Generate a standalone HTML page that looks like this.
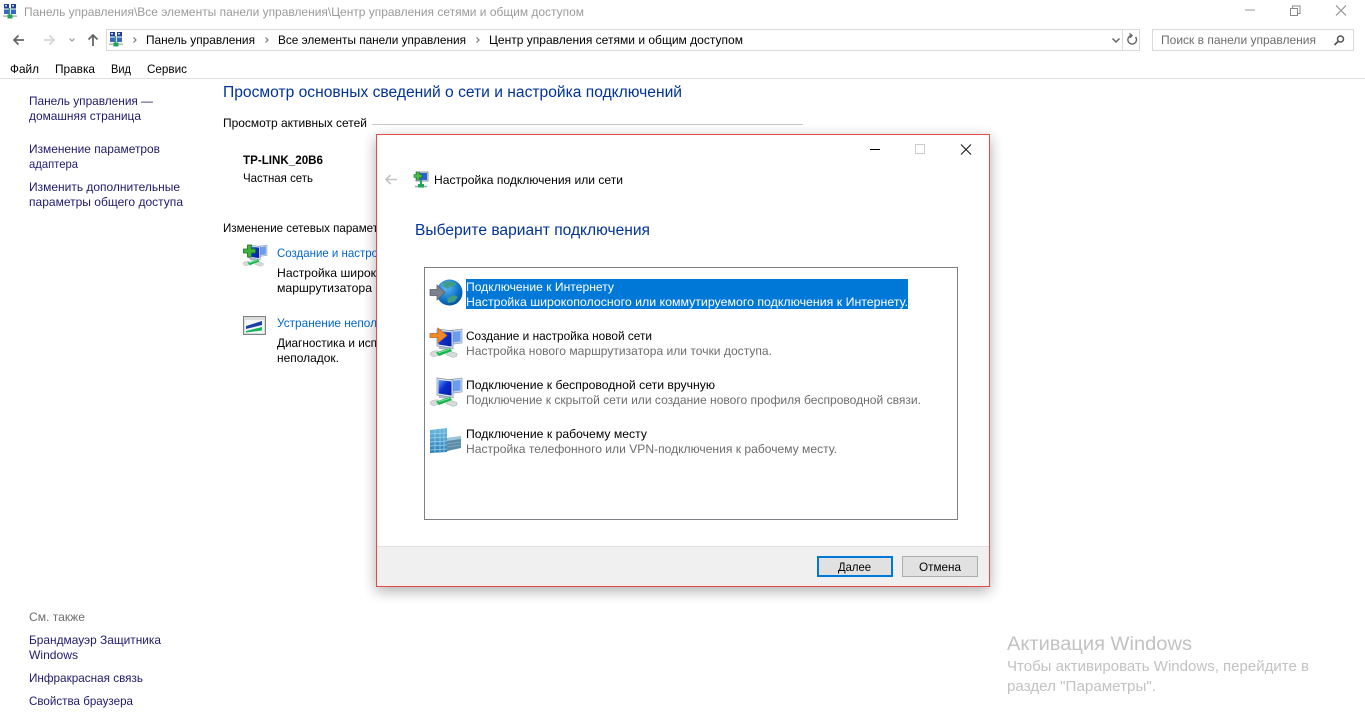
<!DOCTYPE html>
<html lang="ru"><head><meta charset="utf-8"><title>Центр управления сетями и общим доступом</title>
<style>
html,body{margin:0;padding:0;background:#fff;overflow:hidden}
svg{display:block}
text{font-family:"Liberation Sans","DejaVu Sans",sans-serif;font-size:12px;fill:#000;white-space:pre}
.g{fill:#9b9b9b}.l{fill:#1f1a6e}.b{fill:#0066cc}.h{font-size:15.5px;fill:#003399}.s{fill:#6d6d6d}.w{fill:#c2c2c2}
</style></head><body>
<svg xmlns="http://www.w3.org/2000/svg" width="1365" height="719" viewBox="0 0 1365 719">
<defs>
<filter id="sh" x="-10%" y="-10%" width="120%" height="120%"><feGaussianBlur stdDeviation="7"/></filter>
<radialGradient id="gl" cx=".38" cy=".3" r=".8"><stop offset="0" stop-color="#62bbf2"/><stop offset=".6" stop-color="#0f74cc"/><stop offset="1" stop-color="#06458f"/></radialGradient>
<linearGradient id="scr" x1="0" y1="0" x2="1" y2="1"><stop offset="0" stop-color="#5f9bf5"/><stop offset=".45" stop-color="#0a2fd0"/><stop offset="1" stop-color="#06209c"/></linearGradient>
<linearGradient id="twr" x1="0" y1="0" x2="0" y2="1"><stop offset="0" stop-color="#6db9de"/><stop offset="1" stop-color="#2c7fb5"/></linearGradient>
<g id="cp">
<rect x="1" y="0" width="5" height="4.5" fill="#1f3f9f"/><rect x="8" y="0" width="5" height="4.5" fill="#1f3f9f"/>
<rect x="1" y="5.500" width="5" height="4.500" fill="#3a66c4"/><rect x="8" y="5.500" width="5" height="4.500" fill="#3a66c4"/>
<rect x="2" y="1" width="2" height="1.500" fill="#cfe0f7"/><rect x="9" y="1" width="2" height="1.500" fill="#cfe0f7"/>
<path d="M6.500 4v7" stroke="#2aa55a" stroke-width="1.500"/>
<rect x="0" y="11.500" width="14" height="1.200" fill="#9aa5a5"/><rect x="4.500" y="10.500" width="5" height="4" fill="#1ea55a"/>
</g>
<g id="pc">
<path d="M20 1.500l12-1.500v14l-12 1.500z" fill="#cdd8e8" stroke="#8f9bb0" stroke-width=".7"/>
<path d="M21.500 3l9-1v10.500l-9 1z" fill="#6a9cf0"/>
<path d="M7 0l16 2v17.500L7 17z" fill="#dbe4f1" stroke="#7a8aa5" stroke-width=".7"/>
<path d="M8.500 2l13 1.500v14L8.500 15.500z" fill="url(#scr)"/>
<path d="M9 17.500l9 1.500v2l-9-1z" fill="#aeb8c4"/>
<path d="M0 24.500c1-2 5-3 8-2.500l2 4-6 1.500c-2 0-4-1-4-3z" fill="#d6dbd9" stroke="#a3aaa8" stroke-width=".5"/>
<path d="M19 22l8 2.500v2.500l-4 1.500-7-3z" fill="#d6dbd9" stroke="#a3aaa8" stroke-width=".5"/>
<path d="M6 23.500l14-4.500 2 3-13 5z" fill="#15b54e"/>
<path d="M8 23.500l11-3.500.6.8-11 3.500z" fill="#8ae8a8"/>
</g>
</defs>
<rect width="1365" height="719" fill="#fff"/>
<!-- title bar -->
<use href="#cp" x="3" y="4"/>
<text x="24" y="16" class="g" textLength="560" lengthAdjust="spacingAndGlyphs">Панель управления\Все элементы панели управления\Центр управления сетями и общим доступом</text>
<path d="M1245 10h10" stroke="#9a9a9a"/>
<path d="M1290.500 8.500h7v7h-7zM1292.500 8.500v-2.500h7.500v7.500h-2.500" fill="none" stroke="#8a8a8a"/>
<path d="M1336 5.500l10 10M1346 5.500l-10 10" stroke="#8a8a8a" fill="none"/>
<!-- nav -->
<path d="M24 40H14M18.500 35.500L14 40l4.500 4.500" fill="none" stroke="#666" stroke-width="1.800"/>
<path d="M44 40h10M49.500 35.500L54 40l-4.500 4.500" fill="none" stroke="#d6d6d6" stroke-width="1.800"/>
<path d="M69.500 38.500l2.500 2.500 2.500-2.500" fill="none" stroke="#999" stroke-width="1.200"/>
<path d="M93 46V35M88.500 39.500L93 35l4.500 4.500" fill="none" stroke="#666" stroke-width="1.800"/>
<rect x="106.500" y="29.500" width="1033" height="21" fill="#fff" stroke="#d9d9d9"/>
<use href="#cp" x="109" y="32"/>
<path d="M133.500 37.500l2.500 2.500-2.500 2.500M265.500 37.500l2.500 2.500-2.500 2.500M476.500 37.500l2.500 2.500-2.500 2.500" fill="none" stroke="#777" stroke-width="1.200"/>
<text x="146" y="44" textLength="109" lengthAdjust="spacingAndGlyphs">Панель управления</text>
<text x="278" y="44" textLength="188" lengthAdjust="spacingAndGlyphs">Все элементы панели управления</text>
<text x="489" y="44" textLength="254" lengthAdjust="spacingAndGlyphs">Центр управления сетями и общим доступом</text>
<path d="M1112.500 38.500l3.500 3.500 3.500-3.500" fill="none" stroke="#666" stroke-width="1.500"/>
<path d="M1122.500 30v20" stroke="#d9d9d9"/>
<path d="M1135.500 37a4.300 4.300 0 1 1-4-1.500M1129.500 33.500l2.500 2-2 2.300" fill="none" stroke="#666" stroke-width="1.400"/>
<rect x="1152.500" y="29.500" width="201" height="21" fill="#fff" stroke="#d9d9d9"/>
<text x="1161" y="44" class="s" textLength="155" lengthAdjust="spacingAndGlyphs">Поиск в панели управления</text>
<circle cx="1340.500" cy="39" r="3" fill="none" stroke="#555" stroke-width="1.500"/>
<path d="M1338 41.500l-3.500 3.500" stroke="#555" stroke-width="1.800"/>
<!-- menu -->
<text x="10" y="73" textLength="29" lengthAdjust="spacingAndGlyphs">Файл</text>
<text x="55" y="73" textLength="40" lengthAdjust="spacingAndGlyphs">Правка</text>
<text x="111" y="73" textLength="20" lengthAdjust="spacingAndGlyphs">Вид</text>
<text x="147" y="73" textLength="40" lengthAdjust="spacingAndGlyphs">Сервис</text>
<path d="M0 78.500h1365" stroke="#e0e0e0"/>
<!-- sidebar -->
<text x="29" y="105" class="l" textLength="124" lengthAdjust="spacingAndGlyphs">Панель управления —</text>
<text x="29" y="120" class="l" textLength="112" lengthAdjust="spacingAndGlyphs">домашняя страница</text>
<text x="29" y="153" class="l" textLength="131" lengthAdjust="spacingAndGlyphs">Изменение параметров</text>
<text x="29" y="168" class="l" textLength="49" lengthAdjust="spacingAndGlyphs">адаптера</text>
<text x="29" y="191" class="l" textLength="151" lengthAdjust="spacingAndGlyphs">Изменить дополнительные</text>
<text x="29" y="206" class="l" textLength="154" lengthAdjust="spacingAndGlyphs">параметры общего доступа</text>
<text x="29" y="621" class="s" textLength="56" lengthAdjust="spacingAndGlyphs">См. также</text>
<text x="29" y="644" class="l" textLength="132" lengthAdjust="spacingAndGlyphs">Брандмауэр Защитника</text>
<text x="29" y="659" class="l" textLength="49" lengthAdjust="spacingAndGlyphs">Windows</text>
<text x="29" y="682" class="l" textLength="114" lengthAdjust="spacingAndGlyphs">Инфракрасная связь</text>
<text x="29" y="705" class="l" textLength="104" lengthAdjust="spacingAndGlyphs">Свойства браузера</text>
<!-- main -->
<text x="223" y="97" class="h" textLength="459" lengthAdjust="spacingAndGlyphs">Просмотр основных сведений о сети и настройка подключений</text>
<text x="223" y="127" textLength="144" lengthAdjust="spacingAndGlyphs">Просмотр активных сетей</text>
<path d="M372 124.500h431" stroke="#c8c8c8"/>
<text x="243" y="164" style="font-weight:700" textLength="80" lengthAdjust="spacingAndGlyphs">TP-LINK_20B6</text>
<text x="243" y="182" textLength="70" lengthAdjust="spacingAndGlyphs">Частная сеть</text>
<text x="223" y="232" textLength="155" lengthAdjust="spacingAndGlyphs">Изменение сетевых парамет</text>
<g transform="translate(243,245)">
<use href="#pc" transform="translate(0,0) scale(.75)"/>
<path d="M4.500 0h4v4h4v4h-4v4h-4V8H.500V4h4z" fill="#3db53d" stroke="#1d6f1d" stroke-width=".8"/>
</g>
<text x="277" y="257" class="b" textLength="101" lengthAdjust="spacingAndGlyphs">Создание и настро</text>
<text x="277" y="277" textLength="99" lengthAdjust="spacingAndGlyphs">Настройка широк</text>
<text x="277" y="292" textLength="95" lengthAdjust="spacingAndGlyphs">маршрутизатора</text>
<rect x="243.500" y="316.500" width="22" height="18" fill="#d9dcdc" stroke="#808080"/>
<rect x="245" y="320" width="19" height="13" fill="#f5f6f6"/>
<path d="M246 326l16-5v4l-16 4z" fill="#1c3fa8"/><path d="M246 331l16-4v3.500l-16 2z" fill="#15b35a"/>
<text x="277" y="327" class="b" textLength="100" lengthAdjust="spacingAndGlyphs">Устранение непол</text>
<text x="277" y="347" textLength="100" lengthAdjust="spacingAndGlyphs">Диагностика и исп</text>
<text x="277" y="362" textLength="62" lengthAdjust="spacingAndGlyphs">неполадок.</text>
<!-- watermark -->
<text x="1007" y="650" class="w" style="font-size:19px" textLength="185" lengthAdjust="spacingAndGlyphs">Активация Windows</text>
<text x="1007" y="671" class="w" style="font-size:14.500px" textLength="302" lengthAdjust="spacingAndGlyphs">Чтобы активировать Windows, перейдите в</text>
<text x="1007" y="691" class="w" style="font-size:14.500px" textLength="149" lengthAdjust="spacingAndGlyphs">раздел "Параметры".</text>
<!-- dialog -->
<rect x="376" y="138" width="614" height="453" fill="#000" opacity=".32" filter="url(#sh)"/>
<rect x="376.500" y="134.500" width="613" height="452" fill="#fff" stroke="#e84a4a"/>
<path d="M870 149.500h10" stroke="#000"/>
<rect x="915.500" y="144.500" width="9" height="9" fill="none" stroke="#ccc"/>
<path d="M961 144.500l10 10M971 144.500l-10 10" stroke="#111" fill="none"/>
<path d="M397 179.500H386M390.500 175L386 179.500l4.500 4.500" fill="none" stroke="#c4c4c4" stroke-width="1.600"/>
<g transform="translate(413,171)">
<rect x="3" y="1" width="12" height="9" fill="#dbe5f2" stroke="#71809a" stroke-width=".8"/>
<path d="M4 2h10v7H4z" fill="#2f5fc8"/>
<path d="M8 9v5" stroke="#1ea55a" stroke-width="2"/>
<path d="M2 15.500h12" stroke="#9aa5a5" stroke-width="1.500"/><rect x="5" y="13" width="6" height="3.500" fill="#1ea55a"/>
<path d="M3.500 1h3v2.500H9v3H6.500V9h-3V6.500H1v-3h2.500z" fill="#48c040" stroke="#1d6f1d" stroke-width=".6"/>
</g>
<text x="434" y="184" textLength="189" lengthAdjust="spacingAndGlyphs">Настройка подключения или сети</text>
<text x="415" y="235" class="h" textLength="235" lengthAdjust="spacingAndGlyphs">Выберите вариант подключения</text>
<rect x="424.500" y="267.500" width="533" height="252" fill="#fff" stroke="#7f7f86"/>
<!-- item 1 -->
<rect x="466" y="279" width="442" height="30" fill="#0078d7"/>
<circle cx="449.500" cy="292.500" r="13" fill="url(#gl)"/>
<path d="M443 283c4-3 10-2 14 1l-4 3-3-1-2 3-4-2zM447 298l7-3 4 2-4 5-6 1z" fill="#3f9d86"/>
<path d="M430 289.500h7V285l8 7.500-8 7.500v-4.500h-7z" fill="#7b828c" stroke="#565c66" stroke-width=".7"/>
<text x="466" y="291" style="fill:#fff" textLength="148" lengthAdjust="spacingAndGlyphs">Подключение к Интернету</text>
<text x="466" y="306" style="fill:#fff" textLength="442" lengthAdjust="spacingAndGlyphs">Настройка широкополосного или коммутируемого подключения к Интернету.</text>
<!-- item 2 -->
<use href="#pc" x="430" y="329"/>
<path d="M430 333.500h8V328l9 7.500-9 7.500v-5.500h-8z" fill="#f28a2a" stroke="#c3631a" stroke-width=".7"/>
<text x="466" y="340" textLength="186" lengthAdjust="spacingAndGlyphs">Создание и настройка новой сети</text>
<text x="466" y="355" class="s" textLength="306" lengthAdjust="spacingAndGlyphs">Настройка нового маршрутизатора или точки доступа.</text>
<!-- item 3 -->
<use href="#pc" x="430" y="378"/>
<text x="466" y="389" textLength="249" lengthAdjust="spacingAndGlyphs">Подключение к беспроводной сети вручную</text>
<text x="466" y="404" class="s" textLength="455" lengthAdjust="spacingAndGlyphs">Подключение к скрытой сети или создание нового профиля беспроводной связи.</text>
<!-- item 4 -->
<path d="M447 438l14-2v12l-14 3z" fill="#5d8ba3"/>
<path d="M447 438l14-2v3l-14 2z" fill="#9cc6da"/>
<path d="M447 444l14-2M447 447l14-2" stroke="#86aec2" stroke-width=".8"/>
<path d="M430 430l17-2v24l-17 1z" fill="url(#twr)"/>
<path d="M430 434l17-1M430 438l17-1M430 442l17-1M430 446l17-1M430 450l17-1M435 429.500v23M440 429v23M444 428.500v23.500" stroke="#9ed5ef" stroke-width=".7" fill="none"/>
<text x="466" y="438" textLength="181" lengthAdjust="spacingAndGlyphs">Подключение к рабочему месту</text>
<text x="466" y="453" class="s" textLength="371" lengthAdjust="spacingAndGlyphs">Настройка телефонного или VPN-подключения к рабочему месту.</text>
<!-- footer -->
<rect x="377" y="546" width="612" height="40" fill="#f0f0f0"/>
<path d="M377 546.500h612" stroke="#dfdfdf"/>
<rect x="818" y="557" width="74" height="19" fill="#e1e1e1" stroke="#0078d7" stroke-width="2"/>
<text x="838" y="571" textLength="33" lengthAdjust="spacingAndGlyphs">Далее</text>
<rect x="902.500" y="556.500" width="75" height="20" fill="#e1e1e1" stroke="#adadad"/>
<text x="919" y="571" textLength="42" lengthAdjust="spacingAndGlyphs">Отмена</text>
</svg>
</body></html>
